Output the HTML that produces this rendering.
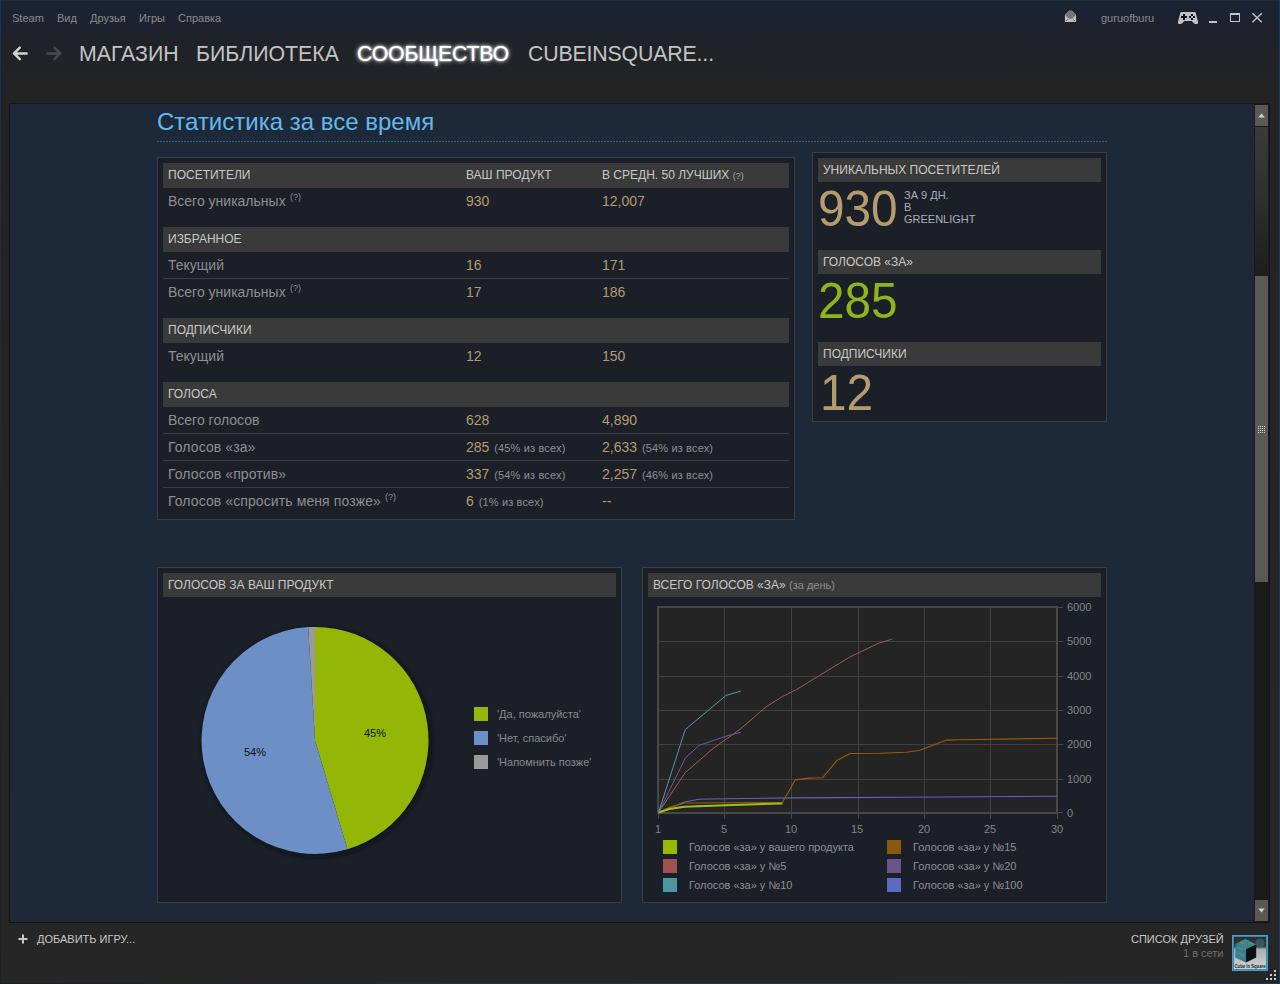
<!DOCTYPE html>
<html><head><meta charset="utf-8"><style>
*{margin:0;padding:0;box-sizing:border-box}
html,body{width:1280px;height:984px;overflow:hidden;background:#242424}
body{font-family:"Liberation Sans",sans-serif;position:relative}
.t{position:absolute;white-space:nowrap;line-height:1}
.r{position:absolute}
svg{position:absolute;overflow:visible}
</style></head><body>
<div class="r" style="left:0px;top:0px;width:1280px;height:984px;background:linear-gradient(#1b2333 0px,#1b2231 14px,#1f2228 45px,#222325 75px,#232323 100px,#252525 600px,#262626 984px);"></div>
<div class="r" style="left:0px;top:0px;width:1280px;height:1px;background:#1c2b3d;"></div>
<div class="r" style="left:0px;top:0px;width:1px;height:984px;background:linear-gradient(#1a3656,#1d2a38 40%,#1e2024);"></div>
<div class="r" style="left:1279px;top:0px;width:1px;height:984px;background:#1a3b5e;"></div>
<div class="r" style="left:0px;top:983px;width:1280px;height:1px;background:linear-gradient(90deg,#1d2127,#1a2f45 40%,#193a5c);"></div>
<div class="t" style="left:12px;top:13px;font-size:11px;color:#8c8c8c;">Steam</div>
<div class="t" style="left:57px;top:13px;font-size:11px;color:#8c8c8c;">Вид</div>
<div class="t" style="left:90px;top:13px;font-size:11px;color:#8c8c8c;">Друзья</div>
<div class="t" style="left:139px;top:13px;font-size:11px;color:#8c8c8c;">Игры</div>
<div class="t" style="left:178px;top:13px;font-size:11px;color:#8c8c8c;">Справка</div>
<svg style="left:0;top:0" width="80" height="80"><path d="M26.6 53.4H14.8M19.8 47.6L14 53.4L19.8 59.2" stroke="#cfcfcf" stroke-width="2.5" fill="none" stroke-linecap="round" stroke-linejoin="round"/><path d="M47.4 53.4H59.2M54.4 47.6L60.2 53.4L54.4 59.2" stroke="#4a4a4a" stroke-width="2.5" fill="none" stroke-linecap="round" stroke-linejoin="round"/></svg>
<div class="t" style="left:79px;top:44px;font-size:21.3px;color:#c4c4c4;">МАГАЗИН</div>
<div class="t" style="left:196px;top:44px;font-size:21.3px;color:#c4c4c4;">БИБЛИОТЕКА</div>
<div class="t" style="left:357px;top:44px;font-size:21.3px;color:#ffffff;letter-spacing:-0.2px;text-shadow:0 0 2px rgba(255,255,255,.9),0 0 4px rgba(255,255,255,.75),0 0 6px rgba(255,255,255,.35)">СООБЩЕСТВО</div>
<div class="t" style="left:528px;top:44px;font-size:21.3px;color:#c4c4c4;letter-spacing:-0.15px">CUBEINSQUARE...</div>
<svg style="left:1060px;top:6px" width="22" height="22" viewBox="0 0 22 22"><path d="M4.9 8.9L9.1 4.7H12.1L16.1 8.9V16.1H4.9Z" fill="#babcbf"/><path d="M4.9 8.9L9.1 4.7H12.1L16.1 8.9L12.3 12.2Q10.5 13.3 8.7 12.2Z" fill="#727477"/><path d="M5.9 15.1L8.2 13.1M15.1 15.1L12.8 13.1" stroke="#5a5c60" stroke-width="0.9"/></svg>
<div class="t" style="left:1101px;top:13px;font-size:11px;color:#8c8c8c;">guruofburu</div>
<svg style="left:1174px;top:8px" width="28" height="20" viewBox="0 0 28 20"><path d="M7.6 4H20.4Q21.4 4 21.8 5L24.1 14.3Q24.4 16 22.9 16H21.3Q20.3 16 19.6 15.1L17.6 13.1H10.4L8.4 15.1Q7.7 16 6.7 16H5.1Q3.6 16 3.9 14.3L6.2 5Q6.6 4 7.6 4Z" fill="#c2c0c0"/><rect x="9" y="6" width="2" height="6" fill="#0d1018"/><rect x="7" y="8" width="6" height="2" fill="#0d1018"/><rect x="17" y="6" width="2" height="2" fill="#0d1018"/><rect x="15" y="8" width="2" height="2" fill="#0d1018"/><rect x="19" y="8" width="2" height="2" fill="#0d1018"/><rect x="17" y="10" width="2" height="2" fill="#0d1018"/></svg>
<div class="r" style="left:1209px;top:21px;width:8px;height:2px;background:#c4c4c4;"></div>
<div class="r" style="left:1230px;top:13px;width:10px;height:9px;background:transparent;border:1.3px solid #c4c4c4;border-top-width:2.5px"></div>
<svg style="left:1250px;top:11px" width="14" height="14" viewBox="0 0 14 14"><path d="M2.4 2.2L11.8 11.3M11.8 2.2L2.4 11.3" stroke="#c4c4c4" stroke-width="1.4"/></svg>
<div class="r" style="left:9px;top:103px;width:1261px;height:820px;background:#151515;"></div>
<div class="r" style="left:10px;top:104px;width:1244px;height:818px;background:#1d2838;"></div>
<div class="r" style="left:1254px;top:104px;width:15px;height:818px;background:#1a1a1a;"></div>
<div class="r" style="left:1255px;top:105px;width:13px;height:21px;background:#5b5955;"></div>
<svg style="left:1255px;top:105px" width="13" height="21"><path d="M3.2 12.5L6.5 8.6L9.8 12.5Z" fill="#d0d0d0"/></svg>
<div class="r" style="left:1255px;top:127px;width:13px;height:149px;background:linear-gradient(#3a3a3a,#2e2e2e 50%,#1d1d1d);"></div>
<div class="r" style="left:1255px;top:276px;width:13px;height:306px;background:#5b5955;"></div>
<svg style="left:1255px;top:426px" width="13" height="8"><rect x="3" y="0" width="1" height="1" fill="#d4d4d4"/><rect x="3" y="2" width="1" height="1" fill="#d4d4d4"/><rect x="3" y="4" width="1" height="1" fill="#d4d4d4"/><rect x="3" y="6" width="1" height="1" fill="#d4d4d4"/><rect x="5" y="0" width="1" height="1" fill="#d4d4d4"/><rect x="5" y="2" width="1" height="1" fill="#d4d4d4"/><rect x="5" y="4" width="1" height="1" fill="#d4d4d4"/><rect x="5" y="6" width="1" height="1" fill="#d4d4d4"/><rect x="7" y="0" width="1" height="1" fill="#d4d4d4"/><rect x="7" y="2" width="1" height="1" fill="#d4d4d4"/><rect x="7" y="4" width="1" height="1" fill="#d4d4d4"/><rect x="7" y="6" width="1" height="1" fill="#d4d4d4"/><rect x="9" y="0" width="1" height="1" fill="#d4d4d4"/><rect x="9" y="2" width="1" height="1" fill="#d4d4d4"/><rect x="9" y="4" width="1" height="1" fill="#d4d4d4"/><rect x="9" y="6" width="1" height="1" fill="#d4d4d4"/></svg>
<div class="r" style="left:1255px;top:900px;width:13px;height:21px;background:#5b5955;"></div>
<svg style="left:1255px;top:900px" width="13" height="21"><path d="M3.2 8.5L6.5 12.4L9.8 8.5Z" fill="#d0d0d0"/></svg>
<div class="t" style="left:157px;top:110px;font-size:24px;color:#63b9ee;">Статистика за все время</div>
<div class="r" style="left:157px;top:141px;width:950px;height:1px;background:repeating-linear-gradient(90deg,#36607f 0 2px,transparent 2px 3px);"></div>
<div class="r" style="left:157px;top:157px;width:638px;height:363px;background:#1b1f28;border:1px solid #393e47"></div>
<div class="r" style="left:163px;top:163px;width:626px;height:25px;background:#3a3a3a;"></div>
<div class="t" style="left:168px;top:169px;font-size:12px;color:#c8c8c8;">ПОСЕТИТЕЛИ</div>
<div class="t" style="left:466px;top:169px;font-size:12px;color:#c8c8c8;">ВАШ ПРОДУКТ</div>
<div class="t" style="left:602px;top:169px;font-size:12px;color:#c8c8c8;">В СРЕДН. 50 ЛУЧШИХ <span style="font-size:9px;color:#a8a8a8">(?)</span></div>
<div class="t" style="left:168px;top:194px;font-size:14px;color:#8f8f8f;">Всего уникальных</div>
<div class="t" style="left:290px;top:193px;font-size:9px;color:#8f8f8f;">(?)</div>
<div class="t" style="left:466px;top:194px;font-size:14px;color:#b59c6f;">930</div>
<div class="t" style="left:602px;top:194px;font-size:14px;color:#b59c6f;">12,007</div>
<div class="r" style="left:163px;top:227px;width:626px;height:25px;background:#3a3a3a;"></div>
<div class="t" style="left:168px;top:233px;font-size:12px;color:#c8c8c8;">ИЗБРАННОЕ</div>
<div class="t" style="left:168px;top:258px;font-size:14px;color:#8f8f8f;">Текущий</div>
<div class="t" style="left:466px;top:258px;font-size:14px;color:#b59c6f;">16</div>
<div class="t" style="left:602px;top:258px;font-size:14px;color:#b59c6f;">171</div>
<div class="r" style="left:163px;top:278px;width:626px;height:1px;background:#3b3e44;"></div>
<div class="t" style="left:168px;top:285px;font-size:14px;color:#8f8f8f;">Всего уникальных</div>
<div class="t" style="left:290px;top:284px;font-size:9px;color:#8f8f8f;">(?)</div>
<div class="t" style="left:466px;top:285px;font-size:14px;color:#b59c6f;">17</div>
<div class="t" style="left:602px;top:285px;font-size:14px;color:#b59c6f;">186</div>
<div class="r" style="left:163px;top:318px;width:626px;height:25px;background:#3a3a3a;"></div>
<div class="t" style="left:168px;top:324px;font-size:12px;color:#c8c8c8;">ПОДПИСЧИКИ</div>
<div class="t" style="left:168px;top:349px;font-size:14px;color:#8f8f8f;">Текущий</div>
<div class="t" style="left:466px;top:349px;font-size:14px;color:#b59c6f;">12</div>
<div class="t" style="left:602px;top:349px;font-size:14px;color:#b59c6f;">150</div>
<div class="r" style="left:163px;top:382px;width:626px;height:25px;background:#3a3a3a;"></div>
<div class="t" style="left:168px;top:388px;font-size:12px;color:#c8c8c8;">ГОЛОСА</div>
<div class="t" style="left:168px;top:413px;font-size:14px;color:#8f8f8f;">Всего голосов</div>
<div class="t" style="left:466px;top:413px;font-size:14px;color:#b59c6f;">628</div>
<div class="t" style="left:602px;top:413px;font-size:14px;color:#b59c6f;">4,890</div>
<div class="r" style="left:163px;top:433px;width:626px;height:1px;background:#3b3e44;"></div>
<div class="t" style="left:168px;top:440px;font-size:14px;color:#8f8f8f;letter-spacing:0.1px">Голосов «за»</div>
<div class="t" style="left:466px;top:440px;font-size:14px;color:#b59c6f;">285 <span style="font-size:11px;color:#8f8f8f;letter-spacing:0.15px;margin-left:1px">(45% из всех)</span></div>
<div class="t" style="left:602px;top:440px;font-size:14px;color:#b59c6f;">2,633 <span style="font-size:11px;color:#8f8f8f;letter-spacing:0.15px;margin-left:1px">(54% из всех)</span></div>
<div class="r" style="left:163px;top:460px;width:626px;height:1px;background:#3b3e44;"></div>
<div class="t" style="left:168px;top:467px;font-size:14px;color:#8f8f8f;letter-spacing:0.1px">Голосов «против»</div>
<div class="t" style="left:466px;top:467px;font-size:14px;color:#b59c6f;">337 <span style="font-size:11px;color:#8f8f8f;letter-spacing:0.15px;margin-left:1px">(54% из всех)</span></div>
<div class="t" style="left:602px;top:467px;font-size:14px;color:#b59c6f;">2,257 <span style="font-size:11px;color:#8f8f8f;letter-spacing:0.15px;margin-left:1px">(46% из всех)</span></div>
<div class="r" style="left:163px;top:487px;width:626px;height:1px;background:#3b3e44;"></div>
<div class="t" style="left:168px;top:494px;font-size:14px;color:#8f8f8f;letter-spacing:0.1px">Голосов «спросить меня позже»</div>
<div class="t" style="left:385px;top:493px;font-size:9px;color:#8f8f8f;">(?)</div>
<div class="t" style="left:466px;top:494px;font-size:14px;color:#b59c6f;">6 <span style="font-size:11px;color:#8f8f8f;letter-spacing:0.15px;margin-left:1px">(1% из всех)</span></div>
<div class="t" style="left:602px;top:494px;font-size:14px;color:#b59c6f;">--</div>
<div class="r" style="left:812px;top:152px;width:295px;height:270px;background:#1b1f28;border:1px solid #393e47"></div>
<div class="r" style="left:818px;top:158px;width:283px;height:24px;background:#3a3a3a;"></div>
<div class="t" style="left:823px;top:164px;font-size:12px;color:#c8c8c8;">УНИКАЛЬНЫХ ПОСЕТИТЕЛЕЙ</div>
<div class="r" style="left:818px;top:250px;width:283px;height:24px;background:#3a3a3a;"></div>
<div class="t" style="left:823px;top:256px;font-size:12px;color:#c8c8c8;">ГОЛОСОВ «ЗА»</div>
<div class="r" style="left:818px;top:342px;width:283px;height:24px;background:#3a3a3a;"></div>
<div class="t" style="left:823px;top:348px;font-size:12px;color:#c8c8c8;">ПОДПИСЧИКИ</div>
<div class="t" style="left:818px;top:184px;font-size:50px;color:#b59c6f;transform:scaleX(0.955);transform-origin:0 0">930</div>
<div class="t" style="left:904px;top:190px;font-size:11px;color:#a9b0b8;">ЗА 9 ДН.</div>
<div class="t" style="left:904px;top:202px;font-size:11px;color:#a9b0b8;">В</div>
<div class="t" style="left:904px;top:214px;font-size:11px;color:#a9b0b8;">GREENLIGHT</div>
<div class="t" style="left:818px;top:276px;font-size:50px;color:#8fb51a;transform:scaleX(0.955);transform-origin:0 0">285</div>
<div class="t" style="left:820px;top:368px;font-size:50px;color:#b59c6f;transform:scaleX(0.955);transform-origin:0 0">12</div>
<div class="r" style="left:157px;top:567px;width:465px;height:336px;background:#1b1f28;border:1px solid #393e47"></div>
<div class="r" style="left:163px;top:573px;width:453px;height:24px;background:#3a3a3a;"></div>
<div class="t" style="left:168px;top:579px;font-size:12px;color:#c8c8c8;">ГОЛОСОВ ЗА ВАШ ПРОДУКТ</div>
<svg style="left:0;top:0" width="1280" height="984"><defs><filter id="sh" x="-20%" y="-20%" width="140%" height="140%"><feGaussianBlur stdDeviation="2.5"/></filter></defs><circle cx="317.0" cy="742.4" r="114.5" fill="#0e1016" opacity="0.7" filter="url(#sh)"/><path d="M315.00 740.40L315.00 626.90A113.5 113.5 0 0 1 347.47 849.16Z" fill="#93b607"/><path d="M315.00 740.40L347.47 849.16A113.5 113.5 0 1 1 308.19 627.10Z" fill="#6c90c6"/><path d="M315.00 740.40L308.19 627.10A113.5 113.5 0 0 1 315.00 626.90Z" fill="#9a9a9a"/></svg>
<div class="t" style="left:364px;top:728px;font-size:11px;color:#111;">45%</div>
<div class="t" style="left:244px;top:747px;font-size:11px;color:#111;">54%</div>
<div class="r" style="left:474px;top:707px;width:14px;height:14px;background:#93b607;"></div>
<div class="t" style="left:497px;top:709px;font-size:11px;color:#8a8a8a;">'Да, пожалуйста'</div>
<div class="r" style="left:474px;top:731px;width:14px;height:14px;background:#6c90c6;"></div>
<div class="t" style="left:497px;top:733px;font-size:11px;color:#8a8a8a;">'Нет, спасибо'</div>
<div class="r" style="left:474px;top:755px;width:14px;height:14px;background:#9a9a9a;"></div>
<div class="t" style="left:497px;top:757px;font-size:11px;color:#8a8a8a;">'Напомнить позже'</div>
<div class="r" style="left:642px;top:567px;width:465px;height:336px;background:#1b1f28;border:1px solid #393e47"></div>
<div class="r" style="left:648px;top:573px;width:453px;height:24px;background:#3a3a3a;"></div>
<div class="t" style="left:653px;top:579px;font-size:12px;color:#c8c8c8;">ВСЕГО ГОЛОСОВ «ЗА» <span style="font-size:11px;color:#8f8f8f">(за день)</span></div>
<svg style="left:0;top:0" width="1280" height="984"><rect x="657" y="606" width="401" height="208" fill="#242424"/><rect x="724" y="607" width="1" height="206" fill="#404040"/><rect x="791" y="607" width="1" height="206" fill="#404040"/><rect x="858" y="607" width="1" height="206" fill="#404040"/><rect x="924" y="607" width="1" height="206" fill="#404040"/><rect x="990" y="607" width="1" height="206" fill="#404040"/><rect x="658" y="641" width="399" height="1" fill="#404040"/><rect x="658" y="676" width="399" height="1" fill="#404040"/><rect x="658" y="710" width="399" height="1" fill="#404040"/><rect x="658" y="744" width="399" height="1" fill="#404040"/><rect x="658" y="779" width="399" height="1" fill="#404040"/><rect x="657" y="606" width="401" height="2" fill="#474747"/><rect x="657" y="812" width="401" height="2" fill="#474747"/><rect x="657" y="606" width="2" height="208" fill="#474747"/><rect x="1056" y="606" width="2" height="208" fill="#474747"/><rect x="1058" y="607" width="5" height="1" fill="#474747"/><rect x="1058" y="641" width="5" height="1" fill="#474747"/><rect x="1058" y="676" width="5" height="1" fill="#474747"/><rect x="1058" y="710" width="5" height="1" fill="#474747"/><rect x="1058" y="744" width="5" height="1" fill="#474747"/><rect x="1058" y="779" width="5" height="1" fill="#474747"/><rect x="1058" y="812" width="5" height="1" fill="#474747"/><rect x="658" y="814" width="1" height="5" fill="#474747"/><rect x="724" y="814" width="1" height="5" fill="#474747"/><rect x="791" y="814" width="1" height="5" fill="#474747"/><rect x="858" y="814" width="1" height="5" fill="#474747"/><rect x="924" y="814" width="1" height="5" fill="#474747"/><rect x="990" y="814" width="1" height="5" fill="#474747"/><rect x="1057" y="814" width="1" height="5" fill="#474747"/><polyline points="658.5,812.5 684.5,802 698.8,799.2 725,798.7 795,797.9 900,797.2 1057,796.3" fill="none" stroke="#5b68c4" stroke-width="1.1" stroke-linejoin="round"/><polyline points="658.5,812.5 669.2,807.4 684.5,803 782.5,802.3 795.2,779.9 808.6,778.1 822.7,777.7 836.8,760.6 850.2,753.5 879.8,753.2 906.6,752.2 919.9,750.2 946.6,740.1 960,739.8 1057,738.2" fill="none" stroke="#9a5c08" stroke-width="1.1" stroke-linejoin="round"/><polyline points="658.5,812.5 669.2,809 684.5,806.7 725,805.2 782.5,803.4" fill="none" stroke="#9ec010" stroke-width="2.0" stroke-linejoin="round"/><polyline points="658.5,812.5 685.3,772.5 713.3,748.3 740,729.3 766.4,706.6 782.3,696.7 796.8,689.4 819.3,675.6 849.6,657.1 878.7,643.2 891.9,639.2" fill="none" stroke="#a05a5a" stroke-width="1.0" stroke-linejoin="round"/><polyline points="658.5,812.5 685.3,758 699.1,745.4 726.1,736.2 740.8,732.3" fill="none" stroke="#75589a" stroke-width="1.0" stroke-linejoin="round"/><polyline points="658.5,812.5 685.3,729.5 726.1,695.4 740.8,691.1" fill="none" stroke="#4e9ca6" stroke-width="1.0" stroke-linejoin="round"/></svg>
<div class="t" style="left:1067px;top:602px;font-size:11px;color:#858585;">6000</div>
<div class="t" style="left:1067px;top:636px;font-size:11px;color:#858585;">5000</div>
<div class="t" style="left:1067px;top:671px;font-size:11px;color:#858585;">4000</div>
<div class="t" style="left:1067px;top:705px;font-size:11px;color:#858585;">3000</div>
<div class="t" style="left:1067px;top:739px;font-size:11px;color:#858585;">2000</div>
<div class="t" style="left:1067px;top:774px;font-size:11px;color:#858585;">1000</div>
<div class="t" style="left:1067px;top:808px;font-size:11px;color:#858585;">0</div>
<div class="t" style="left:655px;top:824px;font-size:11px;color:#858585;">1</div>
<div class="t" style="left:721px;top:824px;font-size:11px;color:#858585;">5</div>
<div class="t" style="left:785px;top:824px;font-size:11px;color:#858585;">10</div>
<div class="t" style="left:851px;top:824px;font-size:11px;color:#858585;">15</div>
<div class="t" style="left:918px;top:824px;font-size:11px;color:#858585;">20</div>
<div class="t" style="left:984px;top:824px;font-size:11px;color:#858585;">25</div>
<div class="t" style="left:1051px;top:824px;font-size:11px;color:#858585;">30</div>
<div class="r" style="left:663px;top:840px;width:14px;height:14px;background:#99b800;"></div>
<div class="t" style="left:689px;top:842px;font-size:11px;color:#8f8f8f;">Голосов «за» у вашего продукта</div>
<div class="r" style="left:663px;top:859px;width:14px;height:14px;background:#a05252;"></div>
<div class="t" style="left:689px;top:861px;font-size:11px;color:#8f8f8f;">Голосов «за» у №5</div>
<div class="r" style="left:663px;top:878px;width:14px;height:14px;background:#4b96a0;"></div>
<div class="t" style="left:689px;top:880px;font-size:11px;color:#8f8f8f;">Голосов «за» у №10</div>
<div class="r" style="left:887px;top:840px;width:14px;height:14px;background:#8a5a0c;"></div>
<div class="t" style="left:913px;top:842px;font-size:11px;color:#8f8f8f;">Голосов «за» у №15</div>
<div class="r" style="left:887px;top:859px;width:14px;height:14px;background:#6b5288;"></div>
<div class="t" style="left:913px;top:861px;font-size:11px;color:#8f8f8f;">Голосов «за» у №20</div>
<div class="r" style="left:887px;top:878px;width:14px;height:14px;background:#5d6ac2;"></div>
<div class="t" style="left:913px;top:880px;font-size:11px;color:#8f8f8f;">Голосов «за» у №100</div>
<svg style="left:17px;top:933px" width="12" height="12"><path d="M6 1.5V10.5M1.5 6H10.5" stroke="#c8c8c8" stroke-width="2"/></svg>
<div class="t" style="left:37px;top:934px;font-size:11px;color:#c8c8c8;">ДОБАВИТЬ ИГРУ...</div>
<div class="t" style="left:1131px;top:934px;font-size:11px;color:#c8c8c8;">СПИСОК ДРУЗЕЙ</div>
<div class="t" style="left:1183px;top:948px;font-size:11px;color:#707070;">1 в сети</div>
<div class="r" style="left:1232px;top:935px;width:36px;height:36px;background:#4b9dca;"></div>
<div class="r" style="left:1233px;top:936px;width:34px;height:34px;background:#3b86b0;"></div>
<svg style="left:1234px;top:937px" width="32" height="32" viewBox="0 0 32 32"><defs><linearGradient id="av" x1="0" y1="0" x2="0" y2="1"><stop offset="0" stop-color="#2a2c2d"/><stop offset=".3" stop-color="#3a3d3e"/><stop offset=".38" stop-color="#a9adad"/><stop offset="1" stop-color="#cfd3d3"/></linearGradient></defs><rect width="32" height="32" fill="url(#av)"/><circle cx="26" cy="6" r="4.5" fill="#33626a" opacity=".8"/><path d="M1.5 7L11.5 1.8L22.2 7.6L11.9 12.3Z" fill="#3f8585"/><path d="M1.5 7L11.9 12.3V25.4L1.2 20.5Z" fill="#3a7f92"/><path d="M11.9 12.3L22.2 7.6V20.5L11.9 25.4Z" fill="#0b1214"/><path d="M3 10L9 13M4 16L10 19M14 5L19 7M6 5L10 7" stroke="#79b9c2" stroke-width=".8" opacity=".5"/><text x="16" y="31" text-anchor="middle" font-family="Liberation Sans" font-weight="bold" font-size="6.2" fill="#1a1c1c" textLength="31" lengthAdjust="spacingAndGlyphs">Cube In Square</text></svg>
<div class="r" style="left:1274px;top:970px;width:2px;height:2px;background:#cfcfcf;"></div>
<div class="r" style="left:1270px;top:974px;width:2px;height:2px;background:#cfcfcf;"></div>
<div class="r" style="left:1274px;top:974px;width:2px;height:2px;background:#cfcfcf;"></div>
<div class="r" style="left:1266px;top:978px;width:2px;height:2px;background:#cfcfcf;"></div>
<div class="r" style="left:1270px;top:978px;width:2px;height:2px;background:#cfcfcf;"></div>
<div class="r" style="left:1274px;top:978px;width:2px;height:2px;background:#cfcfcf;"></div>
</body></html>
